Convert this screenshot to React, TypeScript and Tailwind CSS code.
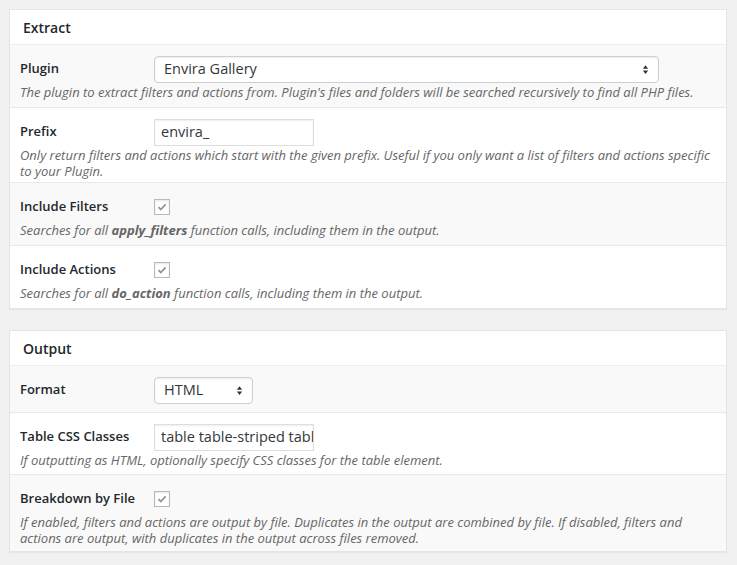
import React from 'react';

const Check = () => (
    <span className="flex items-center justify-center w-4 h-4 border border-[#b4b9be] bg-white shadow-[inset_0_1px_2px_rgba(0,0,0,0.1)]">
        <svg width="12" height="12" viewBox="0 0 12 12">
            <path d="M2.5 6.2 L4.8 8.5 L9.6 3.4" fill="none" stroke="#8f959b" strokeWidth="1.8" />
        </svg>
    </span>
);

const Arrows = () => (
    <svg width="7" height="11" viewBox="0 0 8 12" className="shrink-0">
        <path d="M4 1 L7 5 L1 5 Z" fill="#333" />
        <path d="M4 11 L7 7 L1 7 Z" fill="#333" />
    </svg>
);

const SelectBox = ({ value, width }: { value: string; width: string }) => (
    <div className={`flex items-center justify-between h-[27px] px-[9px] bg-white border border-[#cfcfcf] rounded-[4px] shadow-[inset_0_1px_2px_rgba(0,0,0,0.07)] text-[14.5px] text-[#32373c] ${width}`}>
        <span>{value}</span>
        <Arrows />
    </div>
);

const TextBox = ({ value }: { value: string }) => (
    <div className="flex items-center h-[27px] w-[160px] px-[6px] bg-white border border-[#ddd] shadow-[inset_0_1px_2px_rgba(0,0,0,0.07)] text-[14.5px] text-[#32373c] overflow-hidden whitespace-nowrap">
        {value}
    </div>
);

interface RowProps {
    label: string;
    control: React.ReactNode;
    desc?: React.ReactNode;
    alt?: boolean;
    last?: boolean;
    pb?: string;
}

const Row: React.FC<RowProps> = ({ label, control, desc, alt, last, pb = 'pb-[7px]' }) => (
    <div className={`px-[10px] pt-[10px] ${pb} ${alt ? 'bg-[#f9f9f9]' : 'bg-white'} ${last ? '' : 'border-b border-[#e8e8e8]'}`}>
        <div className="flex items-center h-[28px]">
            <div className="w-[134px] shrink-0 text-[13px] font-semibold text-[#23282d]">{label}</div>
            {control}
        </div>
        {desc && <p className="mt-[1px] text-[13px] leading-4 italic text-[#666]">{desc}</p>}
    </div>
);

const Panel = ({ title, children }: { title: string; children: React.ReactNode }) => (
    <div className="border border-[#e5e5e5] bg-white shadow-[0_1px_1px_rgba(0,0,0,0.04)]">
        <div className="h-[35px] flex items-center px-[13px] border-b border-[#eee] text-[14px] font-semibold text-[#23282d]">{title}</div>
        {children}
    </div>
);

export default function App() {
    return (
        <div className="min-h-[565px] bg-[#f1f1f1] pt-[9px] pl-[9px] pr-[10px] font-['Open_Sans',sans-serif]">
            <div className="w-[718px] flex flex-col gap-[21px]">
                <Panel title="Extract">
                    <Row
                        alt
                        label="Plugin"
                        control={<SelectBox value="Envira Gallery" width="w-[505px]" />}
                        desc="The plugin to extract filters and actions from. Plugin's files and folders will be searched recursively to find all PHP files."
                    />
                    <Row
                        pb="pb-[3px]"
                        label="Prefix"
                        control={<TextBox value="envira_" />}
                        desc="Only return filters and actions which start with the given prefix. Useful if you only want a list of filters and actions specific to your Plugin."
                    />
                    <Row
                        alt
                        label="Include Filters"
                        control={<Check />}
                        desc={<>Searches for all <b className="font-bold">apply_filters</b> function calls, including them in the output.</>}
                    />
                    <Row
                        last
                        label="Include Actions"
                        control={<Check />}
                        desc={<>Searches for all <b className="font-bold">do_action</b> function calls, including them in the output.</>}
                    />
                </Panel>
                <Panel title="Output">
                    <Row alt pb="pb-[8px]" label="Format" control={<SelectBox value="HTML" width="w-[99px]" />} />
                    <Row
                        pb="pb-[6px]"
                        label="Table CSS Classes"
                        control={<TextBox value="table table-striped tabl" />}
                        desc="If outputting as HTML, optionally specify CSS classes for the table element."
                    />
                    <Row
                        alt
                        last
                        pb="pb-[5px]"
                        label="Breakdown by File"
                        control={<Check />}
                        desc="If enabled, filters and actions are output by file. Duplicates in the output are combined by file. If disabled, filters and actions are output, with duplicates in the output across files removed."
                    />
                </Panel>
            </div>
        </div>
    );
}
